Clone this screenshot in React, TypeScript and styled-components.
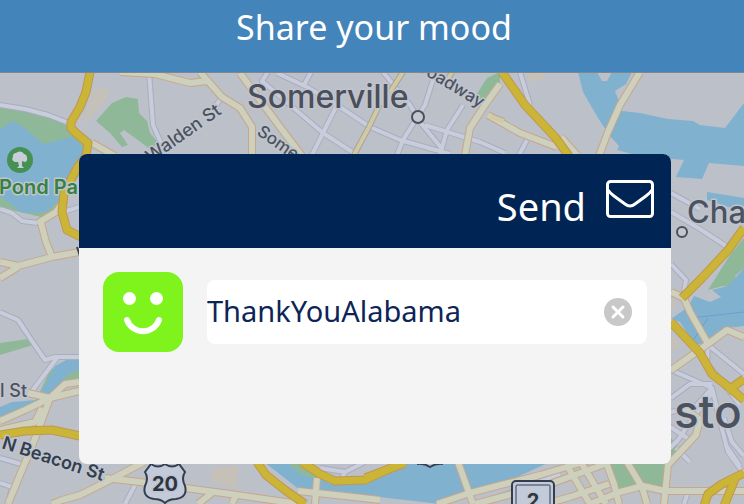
import React, { useState } from 'react';
import styled, { createGlobalStyle } from 'styled-components';

const GlobalStyle = createGlobalStyle`
    * {
        box-sizing: border-box;
    }

    body {
        margin: 0;
        font-family: "Noto Sans", "Open Sans", sans-serif;
    }
`;

const Page = styled.div`
    display: flex;
    flex-direction: column;
    min-height: 100vh;
    overflow: hidden;
`;

const TopBar = styled.header`
    display: flex;
    justify-content: center;
    height: 73px;
    padding-top: 3px;
    background: #4384bb;
    border-bottom: 1px solid #7b8894;
`;

const Title = styled.h1`
    margin: 0;
    padding-left: 4px;
    color: #fff;
    font-size: 34px;
    font-weight: 400;
    line-height: 48px;
`;

const Content = styled.main`
    position: relative;
    flex: 1;
    padding: 81px 73px 40px 79px;
    background: #bcc0c9;
`;

const MapCanvas = styled.svg`
    position: absolute;
    inset: 0;
    width: 100%;
    height: 100%;
    font-family: Inter, Roboto, sans-serif;
`;

const Dialog = styled.form`
    position: relative;
    border-radius: 8px;
    overflow: hidden;
    background: #f4f4f4;
`;

const DialogBar = styled.div`
    display: flex;
    justify-content: flex-end;
    height: 94px;
    padding: 24px 17px 0 0;
    background: #002453;
`;

const SendButton = styled.button`
    display: flex;
    align-items: baseline;
    gap: 20px;
    height: 56px;
    padding: 0;
    border: 0;
    background: none;
    color: #fff;
    font: 400 38px/56px "Noto Sans", "Open Sans", sans-serif;
    cursor: pointer;
`;

const DialogBody = styled.div`
    display: flex;
    align-items: flex-start;
    gap: 24px;
    min-height: 216px;
    padding: 24px;
`;

const MoodButton = styled.button`
    flex: none;
    width: 80px;
    height: 80px;
    padding: 0;
    border: 0;
    border-radius: 16px;
    background: #7ff31c;
    cursor: pointer;

    svg {
        display: block;
    }
`;

const Field = styled.div`
    display: flex;
    align-items: center;
    flex: 1;
    min-width: 0;
    height: 64px;
    margin-top: 8px;
    padding-right: 15px;
    border-radius: 8px;
    background: #fff;
`;

const MoodInput = styled.input`
    flex: 1;
    min-width: 0;
    height: 64px;
    padding: 0 0 4px;
    border: 0;
    outline: 0;
    background: transparent;
    color: #0c2556;
    font: 400 29px/40px "Noto Sans", "Open Sans", sans-serif;
`;

const ClearButton = styled.button`
    flex: none;
    width: 28px;
    height: 28px;
    padding: 0;
    border: 0;
    border-radius: 50%;
    background: #c8c8c8;
    cursor: pointer;

    svg {
        display: block;
    }
`;

const Road = styled.path<{ $color: string; $size: number }>`
    fill: none;
    stroke: ${p => p.$color};
    stroke-width: ${p => p.$size};
    stroke-linejoin: round;
`;

const Water = styled.path`
    fill: #80b2cf;
`;

const Park = styled.path`
    fill: #8fb899;
`;

const Sand = styled.path`
    fill: #c6c1b8;
`;

const MapLabel = styled.text<{ $size: number; $weight?: number; $color?: string }>`
    font-size: ${p => p.$size}px;
    font-weight: ${p => p.$weight || 500};
    fill: ${p => p.$color || '#4b5361'};
    stroke: #c0c4cd;
    stroke-width: 3px;
    stroke-linejoin: round;
    paint-order: stroke;
`;

const streets = [
    'M0 105 25 109 48 115 69 123',
    'M0 209 12 213 22 221 38 223',
    'M60 213 79 207',
    'M149 72 153 125 161 143',
    'M222 97 209 115',
    'M277 73 307 87 337 105 370 127 400 140 450 154',
    'M268 72 262 81 323 133 357 155',
    'M383 72 410 105 420 122 443 150',
    'M433 80 425 105 403 140 397 155',
    'M337 105 322 135 312 155',
    'M311 72 303 87',
    'M463 105 447 130 440 155',
    'M425 125 480 142 505 153',
    'M520 72 530 105',
    'M527 140 519 155',
    'M671 193 700 209',
    'M671 212 700 229 726 246',
    'M671 264 686 280 683 298',
    'M708 345 707 363 740 405',
    'M708 345 744 374',
    'M671 370 712 388 721 425 728 452 744 474',
    'M671 398 690 384 712 384',
    'M671 412 695 407 712 388',
    'M713 392 695 415 678 440 670 448',
    'M724 418 732 442 744 456',
    'M666 424 690 440',
    'M676 448 690 462',
    'M18 320 30 338 45 360 55 357 79 357',
    'M57 358 32 391',
    'M0 458 24 465',
    'M0 483 12 487 8 504',
    'M0 312 18 320 26 332',
    'M135 485 125 504',
    'M320 468 345 472 341 480',
    'M345 472 365 462',
    'M480 504 560 474',
    'M552 484 568 478',
    'M688 492 684 504',
    'M725 444 740 466',
];

const avenues = [
    'M120 72 155 74 190 83 207 81',
    'M200 72 222 97 240 108 252 127 252 155',
    'M240 73 260 100 280 127 302 156',
    'M92 143 115 156',
    'M500 84 485 105 470 128 465 155',
    'M488 115 520 133 557 147',
    'M561 137 577 155',
    'M640 72 620 105 608 132 599 156',
    'M38 223 56 212 65 200',
    'M41 223 46 242 52 257',
    'M0 262 18 266 52 257 79 252',
    'M0 278 18 267',
    'M671 292 684 298 690 312 707 342',
    'M671 370 708 344 727 330 744 337',
    'M0 421 25 410 50 398 65 384 79 382',
    'M28 393 50 398 79 391',
    'M0 430 35 422 42 408',
    'M50 398 36 436 8 504',
    'M52 504 62 500 80 495 110 480 144 462',
    'M105 478 140 482 230 494 300 504',
    'M212 493 198 504',
    'M236 495 232 504',
    'M317 478 315 504',
    'M298 491 345 496 380 500',
    'M458 462 473 504',
    'M437 504 470 493 540 475 590 460',
    'M475 504 550 484 605 464',
    'M566 464 590 504',
    'M582 464 606 504',
    'M545 504 570 497 609 484',
    'M606 462 614 484 619 504',
    'M590 504 620 492 643 486 665 491 744 491',
    'M627 462 642 487 647 504',
    'M700 420 696 435 668 465 664 504',
    'M700 420 680 405',
];

const sideRoads = ['M403 72 390 92', 'M380 104 368 129 354 155', 'M452 72 447 81', 'M490 116 504 121'];

const highways = [
    'M90 72 86 92 80 107 71 122 71 128 77 134 88 143 86 156 77 168 64 193 62 212 67 230 81 237',
    'M502 72 525 105 555 137 569 156',
    'M744 228 728 250 702 278 682 298',
    'M671 322 700 353 712 374 730 388 744 400',
    'M727 391 744 379',
    'M0 435 25 431 52 430 80 436',
    'M257 462 266 475 285 490 305 504',
    'M302 462 320 474 335 481 365 480 380 473 405 462',
    'M744 473 722 484 708 494 704 506',
    'M735 479 724 506',
    'M365 478 405 463',
];

const MoodMap: React.FC = () => (
    <MapCanvas viewBox="0 73 744 431" preserveAspectRatio="xMidYMin slice" aria-hidden="true">
        <Park d="M0 107 25 110 50 117 68 126 84 145 82 170 62 205 45 218 20 212 0 208Z" />
        <Park d="M96 121 112 103 126 97 138 99 139 113 147 121 150 133 159 144 150 149 142 143 124 130 120 133 128 145 122 147 110 133Z" />
        <Park d="M487 78 500 72 500 82 488 104 475 97Z" />
        <Park d="M744 238 730 255 708 290 723 286 740 290 735 276 744 268Z" />
        <Park d="M0 343 28 339 33 345 0 355Z" />
        <Park d="M79 358 79 382 65 382 46 402 36 400 50 370Z" />
        <Park d="M609 462 671 462 664 490 640 487 616 490Z" />
        <Park d="M671 438 680 450 668 466Z" />
        <Water d="M0 129 13 121 25 128 43 144 72 137 84 148 79 170 60 198 47 212 22 213 0 196Z" />
        <Water d="M578 72H597L602 81H607L612 72H632L626 84 615 91 620 104 622 111 640 113 668 119 693 121 700 125 725 128 744 103V166L709 163 702 179 676 177 684 160 640 156 617 150 619 146 610 136 598 118 583 92Z" />
        <Water d="M707 192 744 198V212L707 200Z" />
        <Water d="M671 319 688 307 694 296 710 302 721 297 712 290 728 286 744 268V326L727 328 706 343 695 345 680 322Z" />
        <Water d="M0 407 12 402 36 400 45 385 55 366 68 359H79V370L68 374 58 387 48 400 20 409 0 417Z" />
        <Water d="M264 462H300L330 484 370 482 400 462H550L515 478 480 492 455 500 440 504 370 496 300 490Z" />
        <Park d="M287 462H298L318 474 317 479 300 474Z" />
        <Sand d="M95 88 111 90 105 100 90 118 82 124Z" />
        <Sand d="M525 72H545V78L528 82Z" />
        <Sand d="M671 298 678 303 671 312Z M671 334 682 345 671 352Z" />
        <Sand d="M212 468 238 466 237 488 211 482Z" />
        <path d="M744 312 690 318 M708 318 690 345" fill="none" stroke="#6b9fce" strokeWidth="1" />

        {streets.map(d => <Road key={d} d={d} $color="#a8adbf" $size={6} />)}
        {streets.map(d => <Road key={d} d={d} $color="#c9cddb" $size={4} />)}
        {avenues.map(d => <Road key={d} d={d} $color="#c8a68a" $size={8} />)}
        {sideRoads.map(d => <Road key={d} d={d} $color="#a9a49b" $size={6} />)}
        {avenues.map(d => <Road key={d} d={d} $color="#cdd0bd" $size={6} />)}
        {sideRoads.map(d => <Road key={d} d={d} $color="#d0c9a2" $size={4} />)}
        {highways.map(d => <Road key={d} d={d} $color="#c3954f" $size={9} />)}
        {highways.map(d => <Road key={d} d={d} $color="#cbb536" $size={7} />)}

        {/* park pin */}
        <circle cx="20" cy="160" r="13" fill="#469052" />
        <path
            d="M18 162 15 162A3 3 0 0 1 13 157 3 3 0 0 1 16 153 5 5 0 0 1 24 154 4 4 0 0 1 27 158 3 3 0 0 1 25 162L22 161V166L24 168H17L19 166Z"
            fill="#c7ceda"
        />
        <MapLabel x="-1" y="194" $size={20} $weight={600} $color="#368244">Pond Pa</MapLabel>

        <MapLabel x="247" y="108" $size={32} $color="#4a4f5a">Somerville</MapLabel>
        <MapLabel $size={18} transform="translate(151 163) rotate(-35)">Walden St</MapLabel>
        <MapLabel $size={17} transform="translate(420 72) rotate(31)">roadway</MapLabel>
        <MapLabel $size={17} transform="translate(256 134) rotate(35)">Some</MapLabel>
        <MapLabel x="687" y="223" $size={31}>Cha</MapLabel>
        <MapLabel x="674" y="428" $size={46}>sto</MapLabel>
        <MapLabel x="0" y="397" $size={18}>l St</MapLabel>
        <MapLabel $size={18} $weight={600} $color="#333f50" transform="translate(1 448) rotate(18)">N Beacon St</MapLabel>

        <circle cx="418" cy="117" r="6" fill="#c3c7d0" stroke="#4b4f5a" strokeWidth="2" />
        <circle cx="682" cy="232" r="5" fill="#c3c7d0" stroke="#4b4f5a" strokeWidth="2" />

        {/* route shields */}
        <path
            d="M151 464Q158 469 165 464Q172 469 179 464L185 472Q181 478 185 486Q188 497 176 499Q169 499 165 503Q161 499 154 499Q142 497 145 486Q149 478 145 472Z"
            fill="#c3cbdb"
            stroke="#333f50"
            strokeWidth="2"
        />
        <MapLabel x="165" y="491" textAnchor="middle" $size={20} $weight={700} $color="#2b3645">20</MapLabel>
        <path d="M417 464Q424 463 430 467Q436 463 443 464" fill="#c3cbdb" stroke="#333f50" strokeWidth="2" />
        <rect x="512" y="481" width="42" height="40" rx="4" fill="#c3cbdb" stroke="#333f50" strokeWidth="2" />
        <rect x="516" y="485" width="34" height="36" rx="1" fill="none" stroke="#333f50" />
        <MapLabel x="533" y="508" textAnchor="middle" $size={20} $weight={700} $color="#2b3645">2</MapLabel>
        <path d="M77 247 80 256" stroke="#333f50" strokeWidth="2" />
    </MapCanvas>
);

const App: React.FC = () => {
    const [mood, setMood] = useState('ThankYouAlabama');

    return (
        <>
            <GlobalStyle />
            <Page>
                <TopBar>
                    <Title>Share your mood</Title>
                </TopBar>
                <Content>
                    <MoodMap />
                    <Dialog onSubmit={e => e.preventDefault()}>
                        <DialogBar>
                            <SendButton type="submit">
                                Send
                                <svg width="48" height="41" viewBox="0 0 48 41" fill="none" stroke="#fff" strokeWidth="3" strokeLinejoin="round">
                                    <rect x="1.5" y="1.5" width="45" height="35" rx="3" />
                                    <path d="M2 10Q4 13 8 16L19 24Q24 28 29 24L40 16Q44 13 46 10" />
                                </svg>
                            </SendButton>
                        </DialogBar>
                        <DialogBody>
                            <MoodButton type="button" aria-label="Happy">
                                <svg width="80" height="80" viewBox="0 0 80 80">
                                    <circle cx="26.5" cy="26.5" r="6.5" fill="#fff" />
                                    <circle cx="53.5" cy="26.5" r="6.5" fill="#fff" />
                                    <path d="M24 48A17 17 0 0 0 56 48" fill="none" stroke="#fff" strokeWidth="6" strokeLinecap="round" />
                                </svg>
                            </MoodButton>
                            <Field>
                                <MoodInput aria-label="Mood" value={mood} onChange={e => setMood(e.target.value)} />
                                <ClearButton type="button" aria-label="Clear" onClick={() => setMood('')}>
                                    <svg width="28" height="28" viewBox="0 0 28 28" stroke="#fff" strokeWidth="3" strokeLinecap="round">
                                        <path d="M9 9 19 19M19 9 9 19" />
                                    </svg>
                                </ClearButton>
                            </Field>
                        </DialogBody>
                    </Dialog>
                </Content>
            </Page>
        </>
    );
};

export default App;
